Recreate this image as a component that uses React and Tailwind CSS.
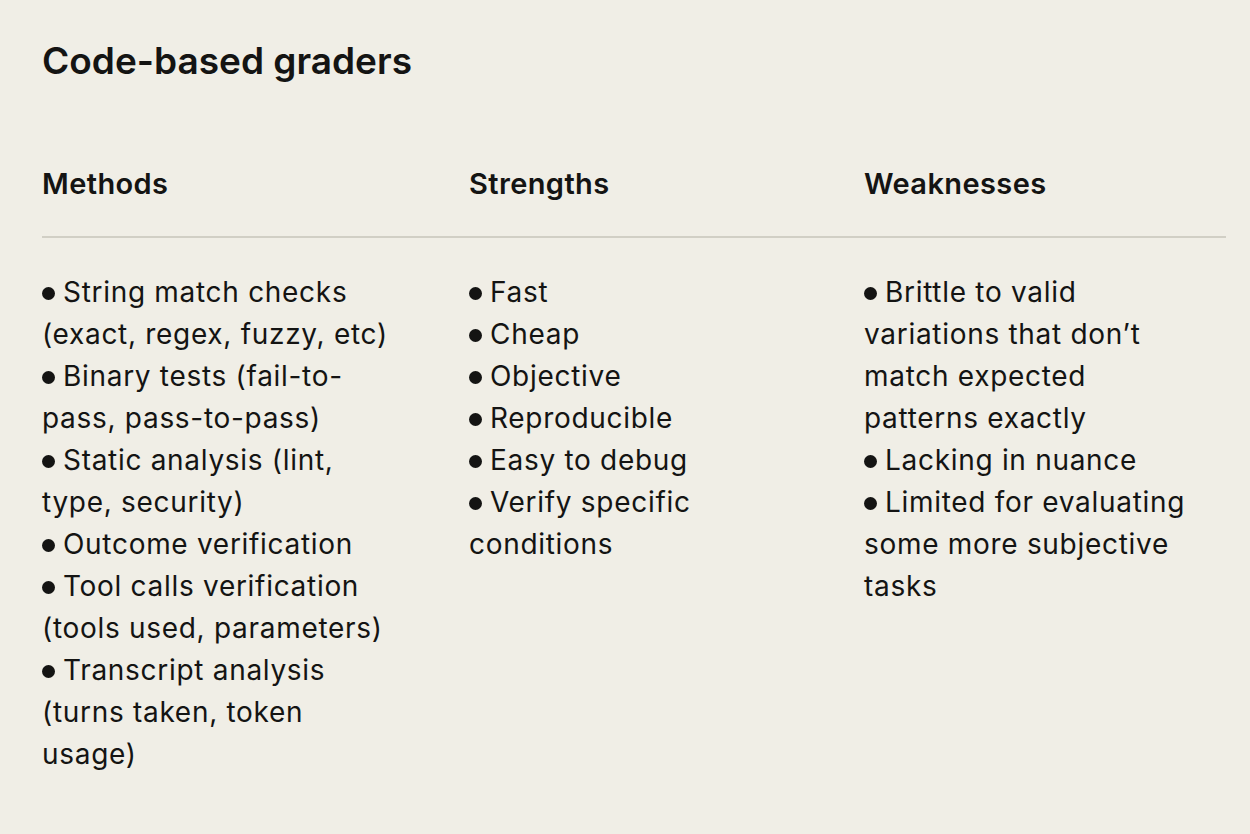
import React from 'react';

const columns = [
  {
    title: 'Methods',
    width: 'w-[358px]',
    items: [
      'String match checks (exact, regex, fuzzy, etc)',
      'Binary tests (fail-to-pass, pass-to-pass)',
      'Static analysis (lint, type, security)',
      'Outcome verification',
      'Tool calls verification (tools used, parameters)',
      'Transcript analysis (turns taken, token usage)',
    ],
  },
  {
    title: 'Strengths',
    width: 'w-[340px]',
    items: ['Fast', 'Cheap', 'Objective', 'Reproducible', 'Easy to debug', 'Verify specific conditions'],
  },
  {
    title: 'Weaknesses',
    width: 'w-[338px]',
    items: [
      'Brittle to valid variations that don’t match expected patterns exactly',
      'Lacking in nuance',
      'Limited for evaluating some more subjective tasks',
    ],
  },
];

const App = () => {
  return (
    <div
      className="min-h-screen bg-[#f0eee6] text-[#141413] px-[42px] pt-[38px]"
      style={{ fontFamily: 'Inter, "Noto Sans", sans-serif' }}
    >
      {/* Title */}
      <h1 className="text-[37px] leading-[46px] font-semibold tracking-[0px]">Code-based graders</h1>

      {/* Header row */}
      <div className="mt-[82px] grid grid-cols-[427px_395px_1fr] border-b-2 border-[#d1cfc5] pb-[34px] mr-[-18px]">
        {columns.map((col) => (
          <div key={col.title} className="text-[29px] leading-[36px] font-semibold tracking-[0.4px]">
            {col.title}
          </div>
        ))}
      </div>

      {/* Body rows */}
      <div className="mt-[33px] grid grid-cols-[427px_395px_1fr] mr-[-18px]">
        {columns.map((col) => (
          <div key={col.title} className={`${col.width} text-[28px] leading-[42px] tracking-[0.7px]`}>
            {col.items.map((item) => (
              <div key={item}>
                <span className="inline-block w-[13px] h-[13px] rounded-full bg-[#141413] mr-[8px] align-[2px]" />
                {item}
              </div>
            ))}
          </div>
        ))}
      </div>
    </div>
  );
};

export default App;
